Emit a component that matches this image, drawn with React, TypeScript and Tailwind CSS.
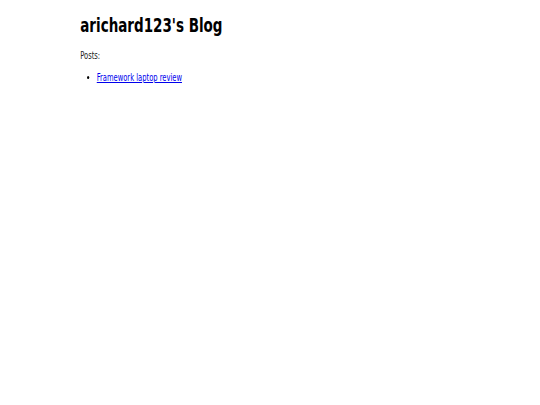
import React from 'react';

export default function App() {
  return (
    <div className="h-[405px] w-[540px] overflow-hidden bg-white text-black">
      {/* page is squeezed horizontally in the reference */}
      <div
        className="w-[720px] origin-top-left scale-x-75 pl-[107px] pt-[13px]"
        style={{ fontFamily: '"DejaVu Sans Condensed", "DejaVu Sans", sans-serif' }}
      >
        <h1 className="text-[20px] font-bold leading-[24px]">arichard123's Blog</h1>
        <p className="mt-[13px] text-[10px] leading-[12px] text-[#222]">Posts:</p>
        <ul className="mt-[10px] list-disc pl-[22px] text-[10px] leading-[12px]">
          <li>
            <a href="#" className="text-[#0000ee] underline">Framework laptop review</a>
          </li>
        </ul>
      </div>
    </div>
  );
}
